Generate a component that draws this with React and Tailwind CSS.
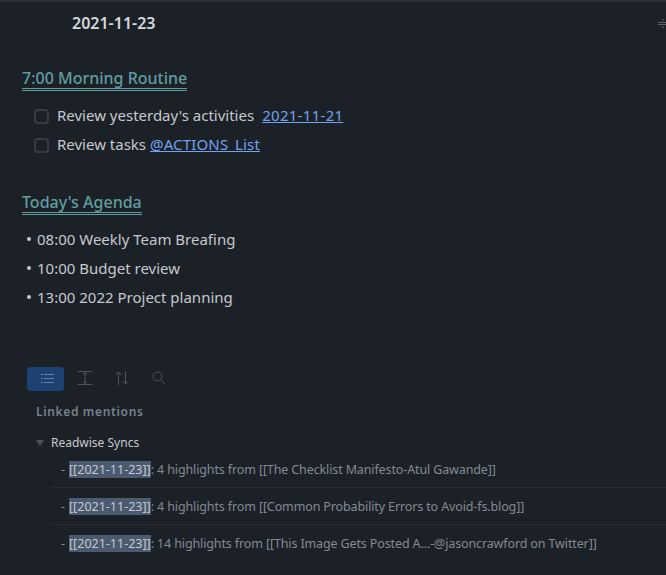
import React from 'react';

const Heading = ({ children }) => (
  <h2 className="inline-block border-b-[3px] border-double border-[#5f9ea0] text-[16px] leading-[20px] font-medium text-[#5f9ea0]">
    {children}
  </h2>
);

const Task = ({ text, link, linkClass }) => (
  <div className="flex h-[29px] items-center">
    <span className="ml-[34px] size-[15px] rounded-[4px] border-2 border-[#3a3a46]" />
    <span className="mb-[3px] ml-2 text-[#c5c9ce]">{text}</span>
    <a className={`mb-[3px] text-[#72a3ee] underline ${linkClass}`}>{link}</a>
  </div>
);

const mentions = [
  ': 4 highlights from [[The Checklist Manifesto-Atul Gawande]]',
  ': 4 highlights from [[Common Probability Errors to Avoid-fs.blog]]',
  ': 14 highlights from [[This Image Gets Posted A...-@jasoncrawford on Twitter]]',
];

export default function App() {
  return (
    <div className="h-[575px] w-[666px] overflow-hidden border-t-2 border-[#2a2f35] bg-[#1c2127] font-['Noto_Sans',sans-serif] text-[15px] leading-[20px]">
      <div className="flex h-[42px] items-center justify-between">
        <h1 className="ml-[72px] text-[16px] font-semibold text-[#d5d8dc]">2021-11-23</h1>
        <svg width="8" height="14" viewBox="0 0 8 14" className="text-[#5c6570]" fill="none" stroke="currentColor">
          <path d="M0 6.500h8M0 8.500h8M4 5l2-2M4 10l2 2" />
        </svg>
      </div>

      <div className="mt-[24px] flex pl-[22px]">
        <Heading>7:00 Morning Routine</Heading>
      </div>
      <div className="mt-[11px]">
        <Task text="Review yesterday's activities" link="2021-11-21" linkClass="ml-[8px] tracking-[0.3px]" />
        <Task text="Review tasks" link="@ACTIONS_List" linkClass="ml-[4px] tracking-[0.15px]" />
      </div>

      <div className="mt-[32px] flex pl-[22px]">
        <Heading>Today's Agenda</Heading>
      </div>
      <ul className="mt-[9px] pl-[27px] text-[#c5c9ce]">
        {['08:00 Weekly Team Breafing', '10:00 Budget review', '13:00 2022 Project planning'].map((item) => (
          <li key={item} className="flex h-[29px] items-center gap-[6px]">
            <span className="size-[4px] rounded-full bg-[#c5c9ce]" />
            {item}
          </li>
        ))}
      </ul>

      <div className="mt-[56px] ml-[27px] flex items-center text-[#4d545e]">
        <div className="flex h-[24px] w-[37px] items-center justify-center rounded-[4px] bg-[#1d4171] text-[#6583a8]">
          <svg className="mb-[2px] ml-[3px]" width="13" height="9" viewBox="0 0 13 9" fill="none" stroke="currentColor">
            <path d="M3 .5h10M3 4.500h10M3 8.500h10M0 .5h2M0 4.500h2M0 8.500h2" />
          </svg>
        </div>
        <svg className="mb-[2px] ml-[14px]" width="14" height="14" viewBox="0 0 14 14" fill="none" stroke="currentColor">
          <path d="M0 .5h14M0 13.500h14M7 1v12M5 3.500l2-2 2 2M5 10.500l2 2 2-2" />
        </svg>
        <svg className="mb-[2px] ml-[23px]" width="14" height="14" viewBox="0 0 14 14" fill="none" stroke="currentColor">
          <path d="M3.500 14V1M.5 4l3-3 3 3M10.500 0v13M7.500 10l3 3 3-3" />
        </svg>
        <svg className="mb-[2px] ml-[23px]" width="14" height="14" viewBox="0 0 14 14" fill="none" stroke="currentColor">
          <circle cx="5.500" cy="5.500" r="4.500" />
          <path d="M9 9l4.500 4.500" />
        </svg>
      </div>

      <div className="mt-[13px] ml-[36px] text-[12px] leading-[16px] font-semibold tracking-[0.65px] text-[#77818e]">Linked mentions</div>

      <div className="mt-[15px] ml-[36px] flex items-center text-[12px] leading-[16px] text-[#c5c9ce]">
        <span className="mr-[7px] h-0 w-0 border-x-[4px] border-t-[6px] border-x-transparent border-t-[#4a525c]" />
        Readwise Syncs
      </div>

      <div className="ml-[50px] text-[12.5px] leading-[17px] text-[#828a94]">
        {mentions.map((m, i) => (
          <div key={i} className={`flex h-[37px] items-center whitespace-nowrap pl-[11px] ${i < 2 ? 'border-b border-[#262b31]' : ''}`}>
            <span className="w-[8px]">-</span>
            <span className="bg-[#4a5a70] text-[#c5c9ce]">[[2021-11-23]]</span>
            <span className="tracking-[-0.125px]">{m}</span>
          </div>
        ))}
      </div>
    </div>
  );
}
